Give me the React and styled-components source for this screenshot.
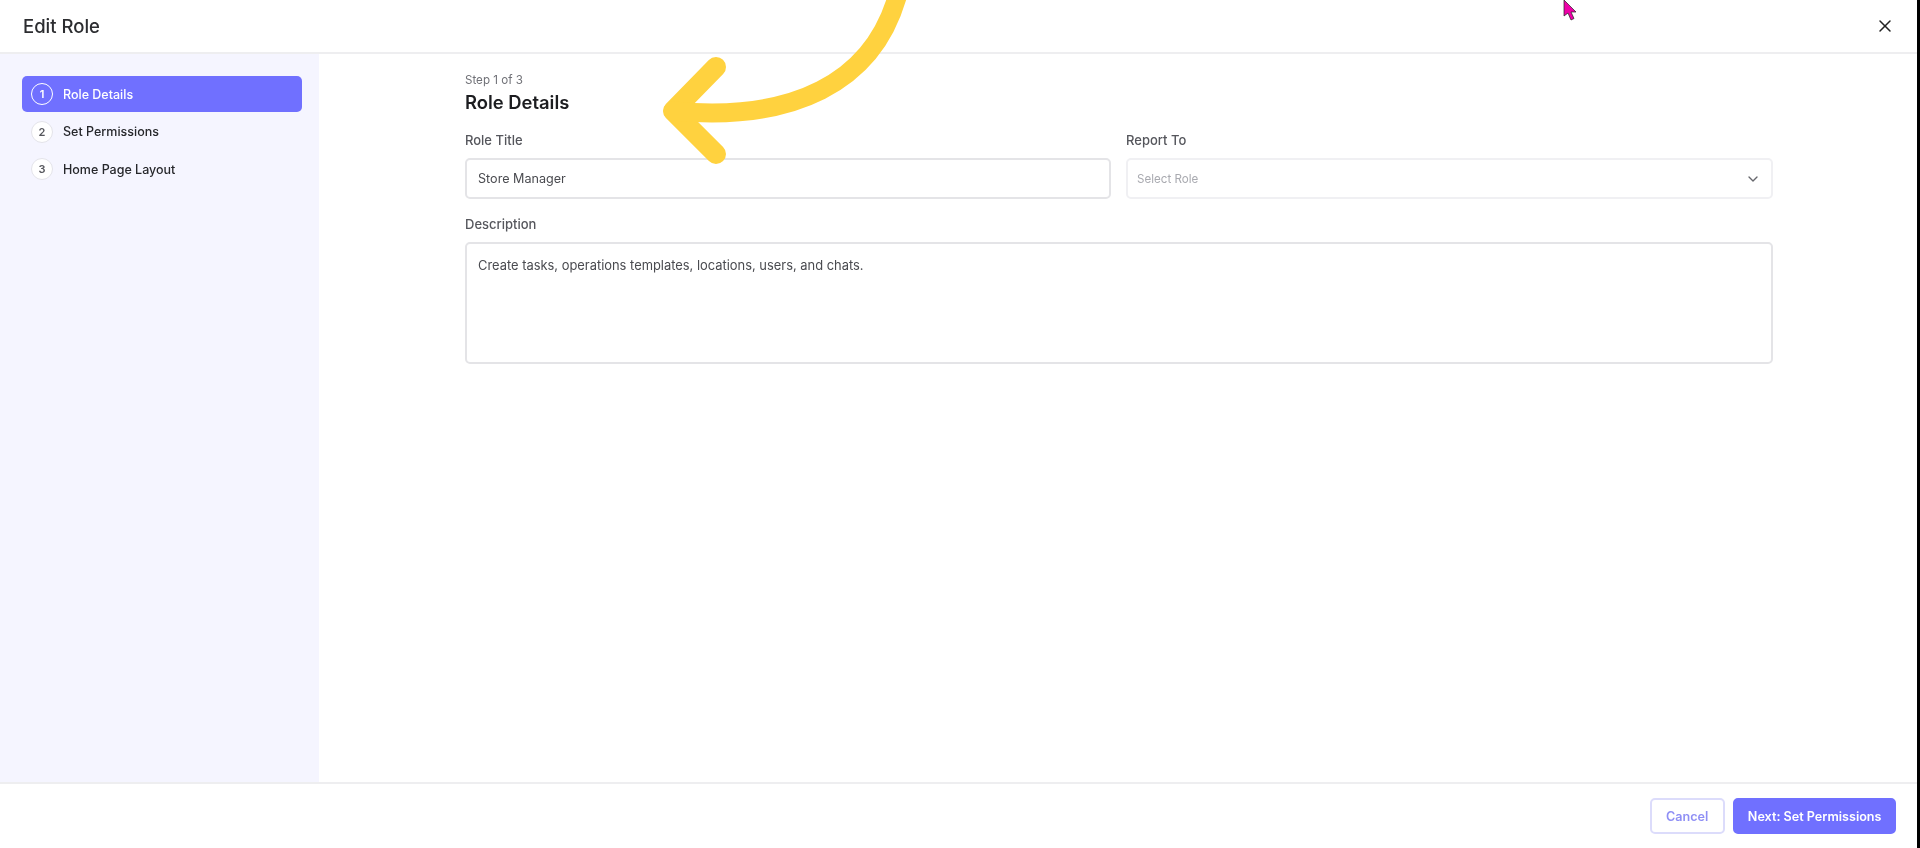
import React from "react";
import styled, { createGlobalStyle } from "styled-components";
import { X, ChevronDown } from "lucide-react";

const Global = createGlobalStyle`
  html, body { margin: 0; padding: 0; height: 100%; background: #fff; overflow: hidden; }
  #root { height: 100%; }
  * { box-sizing: border-box; }
`;

const Page = styled.div`
  position: relative;
  width: 1920px;
  height: 848px;
  display: flex;
  flex-direction: column;
  background: #fff;
  font-family: Inter, "Noto Sans", sans-serif;
  color: #1f2024;
  overflow: hidden;
  border-right: 3px solid #000;
  filter: blur(0.4px);
`;

const Header = styled.header`
  flex: 0 0 54px;
  display: flex;
  align-items: center;
  justify-content: space-between;
  padding: 0 22px 1px 23px;
  border-bottom: 2px solid #eeeef0;
`;

const DialogTitle = styled.h1`
  margin: 0;
  font-size: 18.5px;
  font-weight: 500;
  color: #2c2d30;
`;

const CloseButton = styled.button`
  display: flex;
  border: 0;
  padding: 0;
  background: none;
  color: #222;
`;

const Body = styled.div`
  flex: 1;
  display: flex;
  min-height: 0;
`;

const Sidebar = styled.nav`
  flex: 0 0 319px;
  background: #f5f5ff;
  padding: 22px 17px 0 22px;
  display: flex;
  flex-direction: column;
`;

const StepItem = styled.div`
  height: 36px;
  display: flex;
  align-items: center;
  gap: 10px;
  padding: 0 9px;
  margin-bottom: 1.5px;
  border-radius: 5px;
  font-size: 12.5px;
  font-weight: 500;
  background: ${(p) => (p.$active ? "#7070ff" : "transparent")};
  color: ${(p) => (p.$active ? "#fff" : "#26272b")};
`;

const StepCircle = styled.span`
  flex: 0 0 22px;
  height: 22px;
  border-radius: 50%;
  display: flex;
  align-items: center;
  justify-content: center;
  font-size: 11px;
  font-weight: 600;
  border: 1.5px solid ${(p) => (p.$active ? "#fff" : "#e4e4ea")};
  background: ${(p) => (p.$active ? "transparent" : "#fff")};
  color: ${(p) => (p.$active ? "#fff" : "#55565c")};
`;

const Main = styled.main`
  flex: 1;
  padding: 19px 145px 0 146px;
`;

const StepLabel = styled.div`
  font-size: 11.6px;
  line-height: 15px;
  color: #707177;
`;

const Heading = styled.h2`
  margin: 2px 0 0;
  font-size: 18.4px;
  line-height: 24px;
  font-weight: 600;
  color: #1c1d20;
`;

const FieldRow = styled.div`
  display: grid;
  grid-template-columns: 646px 647px;
  gap: 15px;
  margin-top: 17px;
`;

const Field = styled.div`
  display: flex;
  flex-direction: column;
`;

const Label = styled.label`
  font-size: 13px;
  line-height: 18px;
  font-weight: 500;
  color: #55565c;
  margin-bottom: 9px;
`;

const Input = styled.div`
  height: 41px;
  display: flex;
  align-items: center;
  justify-content: space-between;
  padding: 0 11px;
  border: 2px solid #e4e4e7;
  border-radius: 5px;
  font-size: 12.6px;
  color: #4a4b50;
`;

const Select = styled(Input)`
  border-color: #f0f0f3;
  padding: 0 10px 0 9px;
  font-size: 11.6px;
  color: #a9aab0;
  svg { color: #66676c; }
`;

const TextArea = styled(Input)`
  height: 122px;
  align-items: flex-start;
  padding-top: 13px;
  font-size: 12.9px;
  line-height: 18px;
`;

const DescriptionField = styled(Field)`
  margin-top: 16px;
  width: 1308px;
`;

const Footer = styled.footer`
  flex: 0 0 66px;
  display: flex;
  justify-content: flex-end;
  gap: 8.5px;
  padding: 14px 21px 0 0;
  border-top: 2px solid #eeeef0;
`;

const Button = styled.button`
  height: 36px;
  padding: 0 ${(p) => (p.$primary ? "12.5px" : "14.5px")};
  border-radius: 5px;
  font-family: inherit;
  font-size: 12.6px;
  font-weight: 600;
  border: 2px solid ${(p) => (p.$primary ? "#7070ff" : "#dcdcfb")};
  background: ${(p) => (p.$primary ? "#7070ff" : "#fff")};
  color: ${(p) => (p.$primary ? "#fff" : "#8f8ff5")};
`;

const Annotation = styled.svg`
  position: absolute;
  left: 0;
  top: 0;
  pointer-events: none;
`;

const steps = ["Role Details", "Set Permissions", "Home Page Layout"];

export default function App() {
  return (
    <Page>
      <Global />
      <Header>
        <DialogTitle>Edit Role</DialogTitle>
        <CloseButton aria-label="Close"><X size={20} strokeWidth={1.8} /></CloseButton>
      </Header>
      <Body>
        <Sidebar>
          {steps.map((s, i) => (
            <StepItem key={s} $active={i === 0}>
              <StepCircle $active={i === 0}>{i + 1}</StepCircle>
              {s}
            </StepItem>
          ))}
        </Sidebar>
        <Main>
          <StepLabel>Step 1 of 3</StepLabel>
          <Heading>Role Details</Heading>
          <FieldRow>
            <Field>
              <Label>Role Title</Label>
              <Input>Store Manager</Input>
            </Field>
            <Field>
              <Label>Report To</Label>
              <Select>Select Role<ChevronDown size={16} /></Select>
            </Field>
          </FieldRow>
          <DescriptionField>
            <Label>Description</Label>
            <TextArea>Create tasks, operations templates, locations, users, and chats.</TextArea>
          </DescriptionField>
        </Main>
      </Body>
      <Footer>
        <Button>Cancel</Button>
        <Button $primary>Next: Set Permissions</Button>
      </Footer>
      <Annotation width="1920" height="848" viewBox="0 0 1920 848">
        <g fill="none" stroke="#ffd23f" strokeLinecap="round" strokeLinejoin="round">
          <path strokeWidth="20" d="M716 67 L673 111 L716 154" />
          <path strokeWidth="19" d="M673 111 C790 122 875 85 899 -10" />
        </g>
        <path d="M1564 0 L1564 16 L1568 13 L1571 20 L1574 18.5 L1571 12 L1576 12 Z" fill="#ee00a8" stroke="#222" strokeWidth="0.7" />
      </Annotation>
    </Page>
  );
}
